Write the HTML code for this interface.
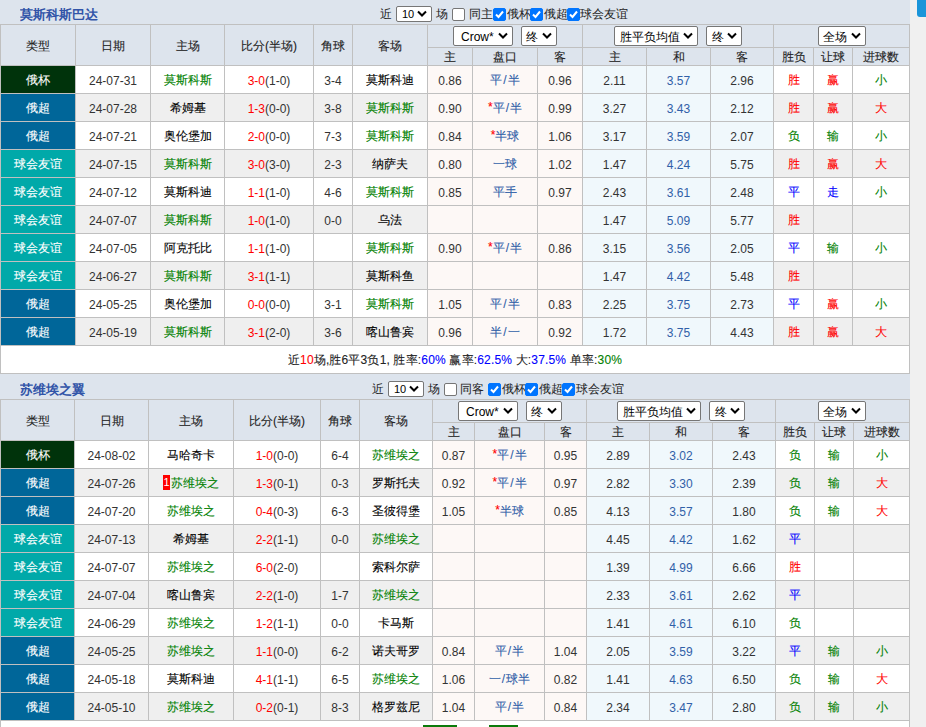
<!DOCTYPE html>
<html><head><meta charset="utf-8"><style>
html,body{margin:0;padding:0;}
body{width:926px;height:727px;overflow:hidden;position:relative;background:#f0f0f0;font-family:"Liberation Sans",sans-serif;font-size:12px;color:#000000;}
body>div{position:absolute;box-sizing:border-box;text-align:center;white-space:nowrap;overflow:hidden;}
.ttl{text-align:left!important;font-size:13px;font-weight:bold;color:#3154a8;width:200px;}
.ct{height:18px;line-height:20px;color:#222;overflow:visible!important;}
.sel{background:#fff;border:1px solid #767676;border-radius:2px;box-sizing:content-box!important;text-align:left!important;padding-left:0;color:#000;}
.sel span{position:absolute;left:5px;top:0;}
.cb{width:13px;height:13px;box-sizing:border-box;border:1px solid #767676;border-radius:2px;background:#fff;}
.cb.on{background:#0075ff;border-color:#0075ff;}
.cb svg{position:absolute;left:-1px;top:-1px;}
.c{position:relative;top:1px;-webkit-text-stroke:0.1px currentColor;}
.d{position:relative;top:2px;color:#333;}
.badge{display:inline-block;background:#f00;color:#fff;width:7px;height:15px;line-height:15px;text-align:center;vertical-align:middle;font-size:11px;position:relative;top:-1px;margin-right:1px;-webkit-text-stroke:0;}
</style></head><body>
<div style="left:0px;top:-1px;width:910px;height:25px;background:#dde4ed"></div>
<div class="ttl" style="left:20px;top:2px;height:25px;line-height:25px">莫斯科斯巴达</div>
<div style="left:0px;top:24px;width:910px;height:41px;background:#dde4ed"></div>
<div style="left:1px;top:25px;width:74px;height:40px;line-height:40px;color:#222"><span class="c">类型</span></div>
<div style="left:76px;top:25px;width:74px;height:40px;line-height:40px;color:#222"><span class="c">日期</span></div>
<div style="left:151px;top:25px;width:73px;height:40px;line-height:40px;color:#222"><span class="c">主场</span></div>
<div style="left:225px;top:25px;width:88px;height:40px;line-height:40px;color:#222"><span class="c">比分(半场)</span></div>
<div style="left:314px;top:25px;width:38px;height:40px;line-height:40px;color:#222"><span class="c">角球</span></div>
<div style="left:353px;top:25px;width:74px;height:40px;line-height:40px;color:#222"><span class="c">客场</span></div>
<div style="left:428px;top:48px;width:44px;height:17px;line-height:17px;color:#222"><span class="c">主</span></div>
<div style="left:473px;top:48px;width:64px;height:17px;line-height:17px;color:#222"><span class="c">盘口</span></div>
<div style="left:538px;top:48px;width:44px;height:17px;line-height:17px;color:#222"><span class="c">客</span></div>
<div style="left:583px;top:48px;width:63px;height:17px;line-height:17px;color:#222"><span class="c">主</span></div>
<div style="left:647px;top:48px;width:63px;height:17px;line-height:17px;color:#222"><span class="c">和</span></div>
<div style="left:711px;top:48px;width:62px;height:17px;line-height:17px;color:#222"><span class="c">客</span></div>
<div style="left:774px;top:48px;width:39px;height:17px;line-height:17px;color:#222"><span class="c">胜负</span></div>
<div style="left:814px;top:48px;width:38px;height:17px;line-height:17px;color:#222"><span class="c">让球</span></div>
<div style="left:853px;top:48px;width:56px;height:17px;line-height:17px;color:#222"><span class="c">进球数</span></div>
<div style="left:1px;top:66px;width:74px;height:27px;background:#00330b;line-height:27px;color:#fff;"><span class="c">俄杯</span></div>
<div style="left:76px;top:66px;width:74px;height:27px;background:#ffffff;line-height:27px;"><span class="d">24-07-31</span></div>
<div style="left:151px;top:66px;width:73px;height:27px;background:#ffffff;line-height:27px;"><span class="c"><span style="color:#008000">莫斯科斯</span></span></div>
<div style="left:225px;top:66px;width:88px;height:27px;background:#ffffff;line-height:27px;"><span class="d"><span style="color:#ff0000">3-0</span>(1-0)</span></div>
<div style="left:314px;top:66px;width:38px;height:27px;background:#ffffff;line-height:27px;"><span class="d">3-4</span></div>
<div style="left:353px;top:66px;width:74px;height:27px;background:#ffffff;line-height:27px;"><span class="c">莫斯科迪</span></div>
<div style="left:428px;top:66px;width:44px;height:27px;background:#fdf8f6;line-height:27px;"><span class="d">0.86</span></div>
<div style="left:473px;top:66px;width:64px;height:27px;background:#fdf8f6;line-height:27px;"><span class="c"><span style="color:#3060a8">平<span style="margin:0 1px">/</span>半</span></span></div>
<div style="left:538px;top:66px;width:44px;height:27px;background:#fdf8f6;line-height:27px;"><span class="d">0.96</span></div>
<div style="left:583px;top:66px;width:63px;height:27px;background:#f0f8fc;line-height:27px;"><span class="d">2.11</span></div>
<div style="left:647px;top:66px;width:63px;height:27px;background:#f0f8fc;line-height:27px;"><span class="d"><span style="color:#3060a8">3.57</span></span></div>
<div style="left:711px;top:66px;width:62px;height:27px;background:#f0f8fc;line-height:27px;"><span class="d">2.96</span></div>
<div style="left:774px;top:66px;width:39px;height:27px;background:#ffffff;line-height:27px;"><span class="c"><span style="color:#ff0000">胜</span></span></div>
<div style="left:814px;top:66px;width:38px;height:27px;background:#ffffff;line-height:27px;"><span class="c"><span style="color:#ff0000">赢</span></span></div>
<div style="left:853px;top:66px;width:56px;height:27px;background:#ffffff;line-height:27px;"><span class="c"><span style="color:#008000">小</span></span></div>
<div style="left:1px;top:94px;width:74px;height:27px;background:#006699;line-height:27px;color:#fff;"><span class="c">俄超</span></div>
<div style="left:76px;top:94px;width:74px;height:27px;background:#efefef;line-height:27px;"><span class="d">24-07-28</span></div>
<div style="left:151px;top:94px;width:73px;height:27px;background:#efefef;line-height:27px;"><span class="c">希姆基</span></div>
<div style="left:225px;top:94px;width:88px;height:27px;background:#efefef;line-height:27px;"><span class="d"><span style="color:#ff0000">1-3</span>(0-0)</span></div>
<div style="left:314px;top:94px;width:38px;height:27px;background:#efefef;line-height:27px;"><span class="d">3-8</span></div>
<div style="left:353px;top:94px;width:74px;height:27px;background:#efefef;line-height:27px;"><span class="c"><span style="color:#008000">莫斯科斯</span></span></div>
<div style="left:428px;top:94px;width:44px;height:27px;background:#fdf8f6;line-height:27px;"><span class="d">0.90</span></div>
<div style="left:473px;top:94px;width:64px;height:27px;background:#fdf8f6;line-height:27px;"><span class="c"><span style="color:#3060a8"><span style="color:#ff0000;position:relative;top:-1px">*</span>平<span style="margin:0 1px">/</span>半</span></span></div>
<div style="left:538px;top:94px;width:44px;height:27px;background:#fdf8f6;line-height:27px;"><span class="d">0.99</span></div>
<div style="left:583px;top:94px;width:63px;height:27px;background:#f0f8fc;line-height:27px;"><span class="d">3.27</span></div>
<div style="left:647px;top:94px;width:63px;height:27px;background:#f0f8fc;line-height:27px;"><span class="d"><span style="color:#3060a8">3.43</span></span></div>
<div style="left:711px;top:94px;width:62px;height:27px;background:#f0f8fc;line-height:27px;"><span class="d">2.12</span></div>
<div style="left:774px;top:94px;width:39px;height:27px;background:#efefef;line-height:27px;"><span class="c"><span style="color:#ff0000">胜</span></span></div>
<div style="left:814px;top:94px;width:38px;height:27px;background:#efefef;line-height:27px;"><span class="c"><span style="color:#ff0000">赢</span></span></div>
<div style="left:853px;top:94px;width:56px;height:27px;background:#efefef;line-height:27px;"><span class="c"><span style="color:#ff0000">大</span></span></div>
<div style="left:1px;top:122px;width:74px;height:27px;background:#006699;line-height:27px;color:#fff;"><span class="c">俄超</span></div>
<div style="left:76px;top:122px;width:74px;height:27px;background:#ffffff;line-height:27px;"><span class="d">24-07-21</span></div>
<div style="left:151px;top:122px;width:73px;height:27px;background:#ffffff;line-height:27px;"><span class="c">奥伦堡加</span></div>
<div style="left:225px;top:122px;width:88px;height:27px;background:#ffffff;line-height:27px;"><span class="d"><span style="color:#ff0000">2-0</span>(0-0)</span></div>
<div style="left:314px;top:122px;width:38px;height:27px;background:#ffffff;line-height:27px;"><span class="d">7-3</span></div>
<div style="left:353px;top:122px;width:74px;height:27px;background:#ffffff;line-height:27px;"><span class="c"><span style="color:#008000">莫斯科斯</span></span></div>
<div style="left:428px;top:122px;width:44px;height:27px;background:#fdf8f6;line-height:27px;"><span class="d">0.84</span></div>
<div style="left:473px;top:122px;width:64px;height:27px;background:#fdf8f6;line-height:27px;"><span class="c"><span style="color:#3060a8"><span style="color:#ff0000;position:relative;top:-1px">*</span>半球</span></span></div>
<div style="left:538px;top:122px;width:44px;height:27px;background:#fdf8f6;line-height:27px;"><span class="d">1.06</span></div>
<div style="left:583px;top:122px;width:63px;height:27px;background:#f0f8fc;line-height:27px;"><span class="d">3.17</span></div>
<div style="left:647px;top:122px;width:63px;height:27px;background:#f0f8fc;line-height:27px;"><span class="d"><span style="color:#3060a8">3.59</span></span></div>
<div style="left:711px;top:122px;width:62px;height:27px;background:#f0f8fc;line-height:27px;"><span class="d">2.07</span></div>
<div style="left:774px;top:122px;width:39px;height:27px;background:#ffffff;line-height:27px;"><span class="c"><span style="color:#008000">负</span></span></div>
<div style="left:814px;top:122px;width:38px;height:27px;background:#ffffff;line-height:27px;"><span class="c"><span style="color:#008000">输</span></span></div>
<div style="left:853px;top:122px;width:56px;height:27px;background:#ffffff;line-height:27px;"><span class="c"><span style="color:#008000">小</span></span></div>
<div style="left:1px;top:150px;width:74px;height:27px;background:#00a9a9;line-height:27px;color:#fff;"><span class="c">球会友谊</span></div>
<div style="left:76px;top:150px;width:74px;height:27px;background:#efefef;line-height:27px;"><span class="d">24-07-15</span></div>
<div style="left:151px;top:150px;width:73px;height:27px;background:#efefef;line-height:27px;"><span class="c"><span style="color:#008000">莫斯科斯</span></span></div>
<div style="left:225px;top:150px;width:88px;height:27px;background:#efefef;line-height:27px;"><span class="d"><span style="color:#ff0000">3-0</span>(3-0)</span></div>
<div style="left:314px;top:150px;width:38px;height:27px;background:#efefef;line-height:27px;"><span class="d">2-3</span></div>
<div style="left:353px;top:150px;width:74px;height:27px;background:#efefef;line-height:27px;"><span class="c">纳萨夫</span></div>
<div style="left:428px;top:150px;width:44px;height:27px;background:#fdf8f6;line-height:27px;"><span class="d">0.80</span></div>
<div style="left:473px;top:150px;width:64px;height:27px;background:#fdf8f6;line-height:27px;"><span class="c"><span style="color:#3060a8">一球</span></span></div>
<div style="left:538px;top:150px;width:44px;height:27px;background:#fdf8f6;line-height:27px;"><span class="d">1.02</span></div>
<div style="left:583px;top:150px;width:63px;height:27px;background:#f0f8fc;line-height:27px;"><span class="d">1.47</span></div>
<div style="left:647px;top:150px;width:63px;height:27px;background:#f0f8fc;line-height:27px;"><span class="d"><span style="color:#3060a8">4.24</span></span></div>
<div style="left:711px;top:150px;width:62px;height:27px;background:#f0f8fc;line-height:27px;"><span class="d">5.75</span></div>
<div style="left:774px;top:150px;width:39px;height:27px;background:#efefef;line-height:27px;"><span class="c"><span style="color:#ff0000">胜</span></span></div>
<div style="left:814px;top:150px;width:38px;height:27px;background:#efefef;line-height:27px;"><span class="c"><span style="color:#ff0000">赢</span></span></div>
<div style="left:853px;top:150px;width:56px;height:27px;background:#efefef;line-height:27px;"><span class="c"><span style="color:#ff0000">大</span></span></div>
<div style="left:1px;top:178px;width:74px;height:27px;background:#00a9a9;line-height:27px;color:#fff;"><span class="c">球会友谊</span></div>
<div style="left:76px;top:178px;width:74px;height:27px;background:#ffffff;line-height:27px;"><span class="d">24-07-12</span></div>
<div style="left:151px;top:178px;width:73px;height:27px;background:#ffffff;line-height:27px;"><span class="c">莫斯科迪</span></div>
<div style="left:225px;top:178px;width:88px;height:27px;background:#ffffff;line-height:27px;"><span class="d"><span style="color:#ff0000">1-1</span>(1-0)</span></div>
<div style="left:314px;top:178px;width:38px;height:27px;background:#ffffff;line-height:27px;"><span class="d">4-6</span></div>
<div style="left:353px;top:178px;width:74px;height:27px;background:#ffffff;line-height:27px;"><span class="c"><span style="color:#008000">莫斯科斯</span></span></div>
<div style="left:428px;top:178px;width:44px;height:27px;background:#fdf8f6;line-height:27px;"><span class="d">0.85</span></div>
<div style="left:473px;top:178px;width:64px;height:27px;background:#fdf8f6;line-height:27px;"><span class="c"><span style="color:#3060a8">平手</span></span></div>
<div style="left:538px;top:178px;width:44px;height:27px;background:#fdf8f6;line-height:27px;"><span class="d">0.97</span></div>
<div style="left:583px;top:178px;width:63px;height:27px;background:#f0f8fc;line-height:27px;"><span class="d">2.43</span></div>
<div style="left:647px;top:178px;width:63px;height:27px;background:#f0f8fc;line-height:27px;"><span class="d"><span style="color:#3060a8">3.61</span></span></div>
<div style="left:711px;top:178px;width:62px;height:27px;background:#f0f8fc;line-height:27px;"><span class="d">2.48</span></div>
<div style="left:774px;top:178px;width:39px;height:27px;background:#ffffff;line-height:27px;"><span class="c"><span style="color:#0000ff">平</span></span></div>
<div style="left:814px;top:178px;width:38px;height:27px;background:#ffffff;line-height:27px;"><span class="c"><span style="color:#0000ff">走</span></span></div>
<div style="left:853px;top:178px;width:56px;height:27px;background:#ffffff;line-height:27px;"><span class="c"><span style="color:#008000">小</span></span></div>
<div style="left:1px;top:206px;width:74px;height:27px;background:#00a9a9;line-height:27px;color:#fff;"><span class="c">球会友谊</span></div>
<div style="left:76px;top:206px;width:74px;height:27px;background:#efefef;line-height:27px;"><span class="d">24-07-07</span></div>
<div style="left:151px;top:206px;width:73px;height:27px;background:#efefef;line-height:27px;"><span class="c"><span style="color:#008000">莫斯科斯</span></span></div>
<div style="left:225px;top:206px;width:88px;height:27px;background:#efefef;line-height:27px;"><span class="d"><span style="color:#ff0000">1-0</span>(1-0)</span></div>
<div style="left:314px;top:206px;width:38px;height:27px;background:#efefef;line-height:27px;"><span class="d">0-0</span></div>
<div style="left:353px;top:206px;width:74px;height:27px;background:#efefef;line-height:27px;"><span class="c">乌法</span></div>
<div style="left:428px;top:206px;width:44px;height:27px;background:#fdf8f6;line-height:27px;"></div>
<div style="left:473px;top:206px;width:64px;height:27px;background:#fdf8f6;line-height:27px;"></div>
<div style="left:538px;top:206px;width:44px;height:27px;background:#fdf8f6;line-height:27px;"></div>
<div style="left:583px;top:206px;width:63px;height:27px;background:#f0f8fc;line-height:27px;"><span class="d">1.47</span></div>
<div style="left:647px;top:206px;width:63px;height:27px;background:#f0f8fc;line-height:27px;"><span class="d"><span style="color:#3060a8">5.09</span></span></div>
<div style="left:711px;top:206px;width:62px;height:27px;background:#f0f8fc;line-height:27px;"><span class="d">5.77</span></div>
<div style="left:774px;top:206px;width:39px;height:27px;background:#efefef;line-height:27px;"><span class="c"><span style="color:#ff0000">胜</span></span></div>
<div style="left:814px;top:206px;width:38px;height:27px;background:#efefef;line-height:27px;"></div>
<div style="left:853px;top:206px;width:56px;height:27px;background:#efefef;line-height:27px;"></div>
<div style="left:1px;top:234px;width:74px;height:27px;background:#00a9a9;line-height:27px;color:#fff;"><span class="c">球会友谊</span></div>
<div style="left:76px;top:234px;width:74px;height:27px;background:#ffffff;line-height:27px;"><span class="d">24-07-05</span></div>
<div style="left:151px;top:234px;width:73px;height:27px;background:#ffffff;line-height:27px;"><span class="c">阿克托比</span></div>
<div style="left:225px;top:234px;width:88px;height:27px;background:#ffffff;line-height:27px;"><span class="d"><span style="color:#ff0000">1-1</span>(1-0)</span></div>
<div style="left:314px;top:234px;width:38px;height:27px;background:#ffffff;line-height:27px;"></div>
<div style="left:353px;top:234px;width:74px;height:27px;background:#ffffff;line-height:27px;"><span class="c"><span style="color:#008000">莫斯科斯</span></span></div>
<div style="left:428px;top:234px;width:44px;height:27px;background:#fdf8f6;line-height:27px;"><span class="d">0.90</span></div>
<div style="left:473px;top:234px;width:64px;height:27px;background:#fdf8f6;line-height:27px;"><span class="c"><span style="color:#3060a8"><span style="color:#ff0000;position:relative;top:-1px">*</span>平<span style="margin:0 1px">/</span>半</span></span></div>
<div style="left:538px;top:234px;width:44px;height:27px;background:#fdf8f6;line-height:27px;"><span class="d">0.86</span></div>
<div style="left:583px;top:234px;width:63px;height:27px;background:#f0f8fc;line-height:27px;"><span class="d">3.15</span></div>
<div style="left:647px;top:234px;width:63px;height:27px;background:#f0f8fc;line-height:27px;"><span class="d"><span style="color:#3060a8">3.56</span></span></div>
<div style="left:711px;top:234px;width:62px;height:27px;background:#f0f8fc;line-height:27px;"><span class="d">2.05</span></div>
<div style="left:774px;top:234px;width:39px;height:27px;background:#ffffff;line-height:27px;"><span class="c"><span style="color:#0000ff">平</span></span></div>
<div style="left:814px;top:234px;width:38px;height:27px;background:#ffffff;line-height:27px;"><span class="c"><span style="color:#008000">输</span></span></div>
<div style="left:853px;top:234px;width:56px;height:27px;background:#ffffff;line-height:27px;"><span class="c"><span style="color:#008000">小</span></span></div>
<div style="left:1px;top:262px;width:74px;height:27px;background:#00a9a9;line-height:27px;color:#fff;"><span class="c">球会友谊</span></div>
<div style="left:76px;top:262px;width:74px;height:27px;background:#efefef;line-height:27px;"><span class="d">24-06-27</span></div>
<div style="left:151px;top:262px;width:73px;height:27px;background:#efefef;line-height:27px;"><span class="c"><span style="color:#008000">莫斯科斯</span></span></div>
<div style="left:225px;top:262px;width:88px;height:27px;background:#efefef;line-height:27px;"><span class="d"><span style="color:#ff0000">3-1</span>(1-1)</span></div>
<div style="left:314px;top:262px;width:38px;height:27px;background:#efefef;line-height:27px;"></div>
<div style="left:353px;top:262px;width:74px;height:27px;background:#efefef;line-height:27px;"><span class="c">莫斯科鱼</span></div>
<div style="left:428px;top:262px;width:44px;height:27px;background:#fdf8f6;line-height:27px;"></div>
<div style="left:473px;top:262px;width:64px;height:27px;background:#fdf8f6;line-height:27px;"></div>
<div style="left:538px;top:262px;width:44px;height:27px;background:#fdf8f6;line-height:27px;"></div>
<div style="left:583px;top:262px;width:63px;height:27px;background:#f0f8fc;line-height:27px;"><span class="d">1.47</span></div>
<div style="left:647px;top:262px;width:63px;height:27px;background:#f0f8fc;line-height:27px;"><span class="d"><span style="color:#3060a8">4.42</span></span></div>
<div style="left:711px;top:262px;width:62px;height:27px;background:#f0f8fc;line-height:27px;"><span class="d">5.48</span></div>
<div style="left:774px;top:262px;width:39px;height:27px;background:#efefef;line-height:27px;"><span class="c"><span style="color:#ff0000">胜</span></span></div>
<div style="left:814px;top:262px;width:38px;height:27px;background:#efefef;line-height:27px;"></div>
<div style="left:853px;top:262px;width:56px;height:27px;background:#efefef;line-height:27px;"></div>
<div style="left:1px;top:290px;width:74px;height:27px;background:#006699;line-height:27px;color:#fff;"><span class="c">俄超</span></div>
<div style="left:76px;top:290px;width:74px;height:27px;background:#ffffff;line-height:27px;"><span class="d">24-05-25</span></div>
<div style="left:151px;top:290px;width:73px;height:27px;background:#ffffff;line-height:27px;"><span class="c">奥伦堡加</span></div>
<div style="left:225px;top:290px;width:88px;height:27px;background:#ffffff;line-height:27px;"><span class="d"><span style="color:#ff0000">0-0</span>(0-0)</span></div>
<div style="left:314px;top:290px;width:38px;height:27px;background:#ffffff;line-height:27px;"><span class="d">3-1</span></div>
<div style="left:353px;top:290px;width:74px;height:27px;background:#ffffff;line-height:27px;"><span class="c"><span style="color:#008000">莫斯科斯</span></span></div>
<div style="left:428px;top:290px;width:44px;height:27px;background:#fdf8f6;line-height:27px;"><span class="d">1.05</span></div>
<div style="left:473px;top:290px;width:64px;height:27px;background:#fdf8f6;line-height:27px;"><span class="c"><span style="color:#3060a8">平<span style="margin:0 1px">/</span>半</span></span></div>
<div style="left:538px;top:290px;width:44px;height:27px;background:#fdf8f6;line-height:27px;"><span class="d">0.83</span></div>
<div style="left:583px;top:290px;width:63px;height:27px;background:#f0f8fc;line-height:27px;"><span class="d">2.25</span></div>
<div style="left:647px;top:290px;width:63px;height:27px;background:#f0f8fc;line-height:27px;"><span class="d"><span style="color:#3060a8">3.75</span></span></div>
<div style="left:711px;top:290px;width:62px;height:27px;background:#f0f8fc;line-height:27px;"><span class="d">2.73</span></div>
<div style="left:774px;top:290px;width:39px;height:27px;background:#ffffff;line-height:27px;"><span class="c"><span style="color:#0000ff">平</span></span></div>
<div style="left:814px;top:290px;width:38px;height:27px;background:#ffffff;line-height:27px;"><span class="c"><span style="color:#ff0000">赢</span></span></div>
<div style="left:853px;top:290px;width:56px;height:27px;background:#ffffff;line-height:27px;"><span class="c"><span style="color:#008000">小</span></span></div>
<div style="left:1px;top:318px;width:74px;height:27px;background:#006699;line-height:27px;color:#fff;"><span class="c">俄超</span></div>
<div style="left:76px;top:318px;width:74px;height:27px;background:#efefef;line-height:27px;"><span class="d">24-05-19</span></div>
<div style="left:151px;top:318px;width:73px;height:27px;background:#efefef;line-height:27px;"><span class="c"><span style="color:#008000">莫斯科斯</span></span></div>
<div style="left:225px;top:318px;width:88px;height:27px;background:#efefef;line-height:27px;"><span class="d"><span style="color:#ff0000">3-1</span>(2-0)</span></div>
<div style="left:314px;top:318px;width:38px;height:27px;background:#efefef;line-height:27px;"><span class="d">3-6</span></div>
<div style="left:353px;top:318px;width:74px;height:27px;background:#efefef;line-height:27px;"><span class="c">喀山鲁宾</span></div>
<div style="left:428px;top:318px;width:44px;height:27px;background:#fdf8f6;line-height:27px;"><span class="d">0.96</span></div>
<div style="left:473px;top:318px;width:64px;height:27px;background:#fdf8f6;line-height:27px;"><span class="c"><span style="color:#3060a8">半<span style="margin:0 1px">/</span>一</span></span></div>
<div style="left:538px;top:318px;width:44px;height:27px;background:#fdf8f6;line-height:27px;"><span class="d">0.92</span></div>
<div style="left:583px;top:318px;width:63px;height:27px;background:#f0f8fc;line-height:27px;"><span class="d">1.72</span></div>
<div style="left:647px;top:318px;width:63px;height:27px;background:#f0f8fc;line-height:27px;"><span class="d"><span style="color:#3060a8">3.75</span></span></div>
<div style="left:711px;top:318px;width:62px;height:27px;background:#f0f8fc;line-height:27px;"><span class="d">4.43</span></div>
<div style="left:774px;top:318px;width:39px;height:27px;background:#efefef;line-height:27px;"><span class="c"><span style="color:#ff0000">胜</span></span></div>
<div style="left:814px;top:318px;width:38px;height:27px;background:#efefef;line-height:27px;"><span class="c"><span style="color:#ff0000">赢</span></span></div>
<div style="left:853px;top:318px;width:56px;height:27px;background:#efefef;line-height:27px;"><span class="c"><span style="color:#ff0000">大</span></span></div>
<div style="left:0px;top:346px;width:910px;height:27px;background:#fff;line-height:27px;letter-spacing:0.17px;color:#222"><span class="c">近<span style="color:#ff0000">10</span>场,胜6平3负1, 胜率:<span style="color:#0000ff">60%</span> 赢率:<span style="color:#0000ff">62.5%</span> 大:<span style="color:#0000ff">37.5%</span> 单率:<span style="color:#008000">30%</span></span></div>
<div style="left:0px;top:24px;width:910px;height:1px;background:#c0c0c0"></div>
<div style="left:427px;top:47px;width:483px;height:1px;background:#c0c0c0"></div>
<div style="left:0px;top:65px;width:910px;height:1px;background:#c0c0c0"></div>
<div style="left:0px;top:93px;width:910px;height:1px;background:#c0c0c0"></div>
<div style="left:0px;top:121px;width:910px;height:1px;background:#c0c0c0"></div>
<div style="left:0px;top:149px;width:910px;height:1px;background:#c0c0c0"></div>
<div style="left:0px;top:177px;width:910px;height:1px;background:#c0c0c0"></div>
<div style="left:0px;top:205px;width:910px;height:1px;background:#c0c0c0"></div>
<div style="left:0px;top:233px;width:910px;height:1px;background:#c0c0c0"></div>
<div style="left:0px;top:261px;width:910px;height:1px;background:#c0c0c0"></div>
<div style="left:0px;top:289px;width:910px;height:1px;background:#c0c0c0"></div>
<div style="left:0px;top:317px;width:910px;height:1px;background:#c0c0c0"></div>
<div style="left:0px;top:345px;width:910px;height:1px;background:#c0c0c0"></div>
<div style="left:0px;top:373px;width:910px;height:1px;background:#c0c0c0"></div>
<div style="left:0px;top:24px;width:1px;height:349px;background:#c0c0c0"></div>
<div style="left:75px;top:24px;width:1px;height:322px;background:#c0c0c0"></div>
<div style="left:150px;top:24px;width:1px;height:322px;background:#c0c0c0"></div>
<div style="left:224px;top:24px;width:1px;height:322px;background:#c0c0c0"></div>
<div style="left:313px;top:24px;width:1px;height:322px;background:#c0c0c0"></div>
<div style="left:352px;top:24px;width:1px;height:322px;background:#c0c0c0"></div>
<div style="left:427px;top:24px;width:1px;height:322px;background:#c0c0c0"></div>
<div style="left:472px;top:47px;width:1px;height:299px;background:#c0c0c0"></div>
<div style="left:537px;top:47px;width:1px;height:299px;background:#c0c0c0"></div>
<div style="left:582px;top:24px;width:1px;height:322px;background:#c0c0c0"></div>
<div style="left:646px;top:47px;width:1px;height:299px;background:#c0c0c0"></div>
<div style="left:710px;top:47px;width:1px;height:299px;background:#c0c0c0"></div>
<div style="left:773px;top:24px;width:1px;height:322px;background:#c0c0c0"></div>
<div style="left:813px;top:47px;width:1px;height:299px;background:#c0c0c0"></div>
<div style="left:852px;top:47px;width:1px;height:299px;background:#c0c0c0"></div>
<div style="left:909px;top:24px;width:1px;height:349px;background:#c0c0c0"></div>
<div class="ct" style="left:379.5px;top:4px;">近</div>
<div class="sel" style="left:396px;top:6px;width:34px;height:14px;"><span style="font-size:11px;line-height:14px;left:5px;top:0px;letter-spacing:0px">10</span><svg width="10" height="7" viewBox="0 0 10 7" style="position:absolute;left:20px;top:3px"><path d="M1 1.5 L5 5.5 L9 1.5" stroke="#000" stroke-width="2" fill="none"/></svg></div>
<div class="ct" style="left:435.5px;top:4px;">场</div>
<div class="cb" style="left:452px;top:8px"></div>
<div class="ct" style="left:468.5px;top:4px;">同主</div>
<div class="cb on" style="left:493px;top:8px"><svg width="13" height="13" viewBox="0 0 13 13"><path d="M3 6.5 L5.5 9 L10 3.5" stroke="#fff" stroke-width="2" fill="none"/></svg></div>
<div class="ct" style="left:507px;top:4px;">俄杯</div>
<div class="cb on" style="left:530px;top:8px"><svg width="13" height="13" viewBox="0 0 13 13"><path d="M3 6.5 L5.5 9 L10 3.5" stroke="#fff" stroke-width="2" fill="none"/></svg></div>
<div class="ct" style="left:544px;top:4px;">俄超</div>
<div class="cb on" style="left:567px;top:8px"><svg width="13" height="13" viewBox="0 0 13 13"><path d="M3 6.5 L5.5 9 L10 3.5" stroke="#fff" stroke-width="2" fill="none"/></svg></div>
<div class="ct" style="left:580px;top:4px;">球会友谊</div>
<div class="sel" style="left:453px;top:26px;width:58px;height:18px;"><span style="font-size:12px;line-height:18px;left:7px;top:1px;letter-spacing:0px">Crow*</span><svg width="10" height="7" viewBox="0 0 10 7" style="position:absolute;left:44px;top:5px"><path d="M1 1.5 L5 5.5 L9 1.5" stroke="#000" stroke-width="2" fill="none"/></svg></div>
<div class="sel" style="left:521px;top:26px;width:34px;height:18px;"><span style="font-size:12px;line-height:18px;left:4px;top:1px;letter-spacing:0px">终</span><svg width="10" height="7" viewBox="0 0 10 7" style="position:absolute;left:20px;top:5px"><path d="M1 1.5 L5 5.5 L9 1.5" stroke="#000" stroke-width="2" fill="none"/></svg></div>
<div class="sel" style="left:614px;top:26px;width:82px;height:18px;"><span style="font-size:12px;line-height:18px;left:5px;top:1px;letter-spacing:0px">胜平负均值</span><svg width="10" height="7" viewBox="0 0 10 7" style="position:absolute;left:68px;top:5px"><path d="M1 1.5 L5 5.5 L9 1.5" stroke="#000" stroke-width="2" fill="none"/></svg></div>
<div class="sel" style="left:706px;top:26px;width:34px;height:18px;"><span style="font-size:12px;line-height:18px;left:5px;top:1px;letter-spacing:0px">终</span><svg width="10" height="7" viewBox="0 0 10 7" style="position:absolute;left:20px;top:5px"><path d="M1 1.5 L5 5.5 L9 1.5" stroke="#000" stroke-width="2" fill="none"/></svg></div>
<div class="sel" style="left:818px;top:26px;width:46px;height:18px;"><span style="font-size:12px;line-height:18px;left:4px;top:1px;letter-spacing:0px">全场</span><svg width="10" height="7" viewBox="0 0 10 7" style="position:absolute;left:32px;top:5px"><path d="M1 1.5 L5 5.5 L9 1.5" stroke="#000" stroke-width="2" fill="none"/></svg></div>
<div style="left:0px;top:374px;width:910px;height:25px;background:#dde4ed"></div>
<div class="ttl" style="left:20px;top:377px;height:25px;line-height:25px">苏维埃之翼</div>
<div style="left:0px;top:399px;width:910px;height:41px;background:#dde4ed"></div>
<div style="left:1px;top:400px;width:73px;height:40px;line-height:40px;color:#222"><span class="c">类型</span></div>
<div style="left:75px;top:400px;width:73px;height:40px;line-height:40px;color:#222"><span class="c">日期</span></div>
<div style="left:149px;top:400px;width:84px;height:40px;line-height:40px;color:#222"><span class="c">主场</span></div>
<div style="left:234px;top:400px;width:86px;height:40px;line-height:40px;color:#222"><span class="c">比分(半场)</span></div>
<div style="left:321px;top:400px;width:38px;height:40px;line-height:40px;color:#222"><span class="c">角球</span></div>
<div style="left:360px;top:400px;width:72px;height:40px;line-height:40px;color:#222"><span class="c">客场</span></div>
<div style="left:433px;top:423px;width:41px;height:17px;line-height:17px;color:#222"><span class="c">主</span></div>
<div style="left:475px;top:423px;width:69px;height:17px;line-height:17px;color:#222"><span class="c">盘口</span></div>
<div style="left:545px;top:423px;width:41px;height:17px;line-height:17px;color:#222"><span class="c">客</span></div>
<div style="left:587px;top:423px;width:62px;height:17px;line-height:17px;color:#222"><span class="c">主</span></div>
<div style="left:650px;top:423px;width:62px;height:17px;line-height:17px;color:#222"><span class="c">和</span></div>
<div style="left:713px;top:423px;width:62px;height:17px;line-height:17px;color:#222"><span class="c">客</span></div>
<div style="left:776px;top:423px;width:38px;height:17px;line-height:17px;color:#222"><span class="c">胜负</span></div>
<div style="left:815px;top:423px;width:38px;height:17px;line-height:17px;color:#222"><span class="c">让球</span></div>
<div style="left:854px;top:423px;width:55px;height:17px;line-height:17px;color:#222"><span class="c">进球数</span></div>
<div style="left:1px;top:441px;width:73px;height:27px;background:#00330b;line-height:27px;color:#fff;"><span class="c">俄杯</span></div>
<div style="left:75px;top:441px;width:73px;height:27px;background:#ffffff;line-height:27px;"><span class="d">24-08-02</span></div>
<div style="left:149px;top:441px;width:84px;height:27px;background:#ffffff;line-height:27px;"><span class="c">马哈奇卡</span></div>
<div style="left:234px;top:441px;width:86px;height:27px;background:#ffffff;line-height:27px;"><span class="d"><span style="color:#ff0000">1-0</span>(0-0)</span></div>
<div style="left:321px;top:441px;width:38px;height:27px;background:#ffffff;line-height:27px;"><span class="d">6-4</span></div>
<div style="left:360px;top:441px;width:72px;height:27px;background:#ffffff;line-height:27px;"><span class="c"><span style="color:#008000">苏维埃之</span></span></div>
<div style="left:433px;top:441px;width:41px;height:27px;background:#fdf8f6;line-height:27px;"><span class="d">0.87</span></div>
<div style="left:475px;top:441px;width:69px;height:27px;background:#fdf8f6;line-height:27px;"><span class="c"><span style="color:#3060a8"><span style="color:#ff0000;position:relative;top:-1px">*</span>平<span style="margin:0 1px">/</span>半</span></span></div>
<div style="left:545px;top:441px;width:41px;height:27px;background:#fdf8f6;line-height:27px;"><span class="d">0.95</span></div>
<div style="left:587px;top:441px;width:62px;height:27px;background:#f0f8fc;line-height:27px;"><span class="d">2.89</span></div>
<div style="left:650px;top:441px;width:62px;height:27px;background:#f0f8fc;line-height:27px;"><span class="d"><span style="color:#3060a8">3.02</span></span></div>
<div style="left:713px;top:441px;width:62px;height:27px;background:#f0f8fc;line-height:27px;"><span class="d">2.43</span></div>
<div style="left:776px;top:441px;width:38px;height:27px;background:#ffffff;line-height:27px;"><span class="c"><span style="color:#008000">负</span></span></div>
<div style="left:815px;top:441px;width:38px;height:27px;background:#ffffff;line-height:27px;"><span class="c"><span style="color:#008000">输</span></span></div>
<div style="left:854px;top:441px;width:55px;height:27px;background:#ffffff;line-height:27px;"><span class="c"><span style="color:#008000">小</span></span></div>
<div style="left:1px;top:469px;width:73px;height:27px;background:#006699;line-height:27px;color:#fff;"><span class="c">俄超</span></div>
<div style="left:75px;top:469px;width:73px;height:27px;background:#efefef;line-height:27px;"><span class="d">24-07-26</span></div>
<div style="left:149px;top:469px;width:84px;height:27px;background:#efefef;line-height:27px;"><span class="c"><span class="badge">1</span><span style="color:#008000">苏维埃之</span></span></div>
<div style="left:234px;top:469px;width:86px;height:27px;background:#efefef;line-height:27px;"><span class="d"><span style="color:#ff0000">1-3</span>(0-1)</span></div>
<div style="left:321px;top:469px;width:38px;height:27px;background:#efefef;line-height:27px;"><span class="d">0-3</span></div>
<div style="left:360px;top:469px;width:72px;height:27px;background:#efefef;line-height:27px;"><span class="c">罗斯托夫</span></div>
<div style="left:433px;top:469px;width:41px;height:27px;background:#fdf8f6;line-height:27px;"><span class="d">0.92</span></div>
<div style="left:475px;top:469px;width:69px;height:27px;background:#fdf8f6;line-height:27px;"><span class="c"><span style="color:#3060a8"><span style="color:#ff0000;position:relative;top:-1px">*</span>平<span style="margin:0 1px">/</span>半</span></span></div>
<div style="left:545px;top:469px;width:41px;height:27px;background:#fdf8f6;line-height:27px;"><span class="d">0.97</span></div>
<div style="left:587px;top:469px;width:62px;height:27px;background:#f0f8fc;line-height:27px;"><span class="d">2.82</span></div>
<div style="left:650px;top:469px;width:62px;height:27px;background:#f0f8fc;line-height:27px;"><span class="d"><span style="color:#3060a8">3.30</span></span></div>
<div style="left:713px;top:469px;width:62px;height:27px;background:#f0f8fc;line-height:27px;"><span class="d">2.39</span></div>
<div style="left:776px;top:469px;width:38px;height:27px;background:#efefef;line-height:27px;"><span class="c"><span style="color:#008000">负</span></span></div>
<div style="left:815px;top:469px;width:38px;height:27px;background:#efefef;line-height:27px;"><span class="c"><span style="color:#008000">输</span></span></div>
<div style="left:854px;top:469px;width:55px;height:27px;background:#efefef;line-height:27px;"><span class="c"><span style="color:#ff0000">大</span></span></div>
<div style="left:1px;top:497px;width:73px;height:27px;background:#006699;line-height:27px;color:#fff;"><span class="c">俄超</span></div>
<div style="left:75px;top:497px;width:73px;height:27px;background:#ffffff;line-height:27px;"><span class="d">24-07-20</span></div>
<div style="left:149px;top:497px;width:84px;height:27px;background:#ffffff;line-height:27px;"><span class="c"><span style="color:#008000">苏维埃之</span></span></div>
<div style="left:234px;top:497px;width:86px;height:27px;background:#ffffff;line-height:27px;"><span class="d"><span style="color:#ff0000">0-4</span>(0-3)</span></div>
<div style="left:321px;top:497px;width:38px;height:27px;background:#ffffff;line-height:27px;"><span class="d">6-3</span></div>
<div style="left:360px;top:497px;width:72px;height:27px;background:#ffffff;line-height:27px;"><span class="c">圣彼得堡</span></div>
<div style="left:433px;top:497px;width:41px;height:27px;background:#fdf8f6;line-height:27px;"><span class="d">1.05</span></div>
<div style="left:475px;top:497px;width:69px;height:27px;background:#fdf8f6;line-height:27px;"><span class="c"><span style="color:#3060a8"><span style="color:#ff0000;position:relative;top:-1px">*</span>半球</span></span></div>
<div style="left:545px;top:497px;width:41px;height:27px;background:#fdf8f6;line-height:27px;"><span class="d">0.85</span></div>
<div style="left:587px;top:497px;width:62px;height:27px;background:#f0f8fc;line-height:27px;"><span class="d">4.13</span></div>
<div style="left:650px;top:497px;width:62px;height:27px;background:#f0f8fc;line-height:27px;"><span class="d"><span style="color:#3060a8">3.57</span></span></div>
<div style="left:713px;top:497px;width:62px;height:27px;background:#f0f8fc;line-height:27px;"><span class="d">1.80</span></div>
<div style="left:776px;top:497px;width:38px;height:27px;background:#ffffff;line-height:27px;"><span class="c"><span style="color:#008000">负</span></span></div>
<div style="left:815px;top:497px;width:38px;height:27px;background:#ffffff;line-height:27px;"><span class="c"><span style="color:#008000">输</span></span></div>
<div style="left:854px;top:497px;width:55px;height:27px;background:#ffffff;line-height:27px;"><span class="c"><span style="color:#ff0000">大</span></span></div>
<div style="left:1px;top:525px;width:73px;height:27px;background:#00a9a9;line-height:27px;color:#fff;"><span class="c">球会友谊</span></div>
<div style="left:75px;top:525px;width:73px;height:27px;background:#efefef;line-height:27px;"><span class="d">24-07-13</span></div>
<div style="left:149px;top:525px;width:84px;height:27px;background:#efefef;line-height:27px;"><span class="c">希姆基</span></div>
<div style="left:234px;top:525px;width:86px;height:27px;background:#efefef;line-height:27px;"><span class="d"><span style="color:#ff0000">2-2</span>(1-1)</span></div>
<div style="left:321px;top:525px;width:38px;height:27px;background:#efefef;line-height:27px;"><span class="d">0-0</span></div>
<div style="left:360px;top:525px;width:72px;height:27px;background:#efefef;line-height:27px;"><span class="c"><span style="color:#008000">苏维埃之</span></span></div>
<div style="left:433px;top:525px;width:41px;height:27px;background:#fdf8f6;line-height:27px;"></div>
<div style="left:475px;top:525px;width:69px;height:27px;background:#fdf8f6;line-height:27px;"></div>
<div style="left:545px;top:525px;width:41px;height:27px;background:#fdf8f6;line-height:27px;"></div>
<div style="left:587px;top:525px;width:62px;height:27px;background:#f0f8fc;line-height:27px;"><span class="d">4.45</span></div>
<div style="left:650px;top:525px;width:62px;height:27px;background:#f0f8fc;line-height:27px;"><span class="d"><span style="color:#3060a8">4.42</span></span></div>
<div style="left:713px;top:525px;width:62px;height:27px;background:#f0f8fc;line-height:27px;"><span class="d">1.62</span></div>
<div style="left:776px;top:525px;width:38px;height:27px;background:#efefef;line-height:27px;"><span class="c"><span style="color:#0000ff">平</span></span></div>
<div style="left:815px;top:525px;width:38px;height:27px;background:#efefef;line-height:27px;"></div>
<div style="left:854px;top:525px;width:55px;height:27px;background:#efefef;line-height:27px;"></div>
<div style="left:1px;top:553px;width:73px;height:27px;background:#00a9a9;line-height:27px;color:#fff;"><span class="c">球会友谊</span></div>
<div style="left:75px;top:553px;width:73px;height:27px;background:#ffffff;line-height:27px;"><span class="d">24-07-07</span></div>
<div style="left:149px;top:553px;width:84px;height:27px;background:#ffffff;line-height:27px;"><span class="c"><span style="color:#008000">苏维埃之</span></span></div>
<div style="left:234px;top:553px;width:86px;height:27px;background:#ffffff;line-height:27px;"><span class="d"><span style="color:#ff0000">6-0</span>(2-0)</span></div>
<div style="left:321px;top:553px;width:38px;height:27px;background:#ffffff;line-height:27px;"></div>
<div style="left:360px;top:553px;width:72px;height:27px;background:#ffffff;line-height:27px;"><span class="c">索科尔萨</span></div>
<div style="left:433px;top:553px;width:41px;height:27px;background:#fdf8f6;line-height:27px;"></div>
<div style="left:475px;top:553px;width:69px;height:27px;background:#fdf8f6;line-height:27px;"></div>
<div style="left:545px;top:553px;width:41px;height:27px;background:#fdf8f6;line-height:27px;"></div>
<div style="left:587px;top:553px;width:62px;height:27px;background:#f0f8fc;line-height:27px;"><span class="d">1.39</span></div>
<div style="left:650px;top:553px;width:62px;height:27px;background:#f0f8fc;line-height:27px;"><span class="d"><span style="color:#3060a8">4.99</span></span></div>
<div style="left:713px;top:553px;width:62px;height:27px;background:#f0f8fc;line-height:27px;"><span class="d">6.66</span></div>
<div style="left:776px;top:553px;width:38px;height:27px;background:#ffffff;line-height:27px;"><span class="c"><span style="color:#ff0000">胜</span></span></div>
<div style="left:815px;top:553px;width:38px;height:27px;background:#ffffff;line-height:27px;"></div>
<div style="left:854px;top:553px;width:55px;height:27px;background:#ffffff;line-height:27px;"></div>
<div style="left:1px;top:581px;width:73px;height:27px;background:#00a9a9;line-height:27px;color:#fff;"><span class="c">球会友谊</span></div>
<div style="left:75px;top:581px;width:73px;height:27px;background:#efefef;line-height:27px;"><span class="d">24-07-04</span></div>
<div style="left:149px;top:581px;width:84px;height:27px;background:#efefef;line-height:27px;"><span class="c">喀山鲁宾</span></div>
<div style="left:234px;top:581px;width:86px;height:27px;background:#efefef;line-height:27px;"><span class="d"><span style="color:#ff0000">2-2</span>(1-0)</span></div>
<div style="left:321px;top:581px;width:38px;height:27px;background:#efefef;line-height:27px;"><span class="d">1-7</span></div>
<div style="left:360px;top:581px;width:72px;height:27px;background:#efefef;line-height:27px;"><span class="c"><span style="color:#008000">苏维埃之</span></span></div>
<div style="left:433px;top:581px;width:41px;height:27px;background:#fdf8f6;line-height:27px;"></div>
<div style="left:475px;top:581px;width:69px;height:27px;background:#fdf8f6;line-height:27px;"></div>
<div style="left:545px;top:581px;width:41px;height:27px;background:#fdf8f6;line-height:27px;"></div>
<div style="left:587px;top:581px;width:62px;height:27px;background:#f0f8fc;line-height:27px;"><span class="d">2.33</span></div>
<div style="left:650px;top:581px;width:62px;height:27px;background:#f0f8fc;line-height:27px;"><span class="d"><span style="color:#3060a8">3.61</span></span></div>
<div style="left:713px;top:581px;width:62px;height:27px;background:#f0f8fc;line-height:27px;"><span class="d">2.62</span></div>
<div style="left:776px;top:581px;width:38px;height:27px;background:#efefef;line-height:27px;"><span class="c"><span style="color:#0000ff">平</span></span></div>
<div style="left:815px;top:581px;width:38px;height:27px;background:#efefef;line-height:27px;"></div>
<div style="left:854px;top:581px;width:55px;height:27px;background:#efefef;line-height:27px;"></div>
<div style="left:1px;top:609px;width:73px;height:27px;background:#00a9a9;line-height:27px;color:#fff;"><span class="c">球会友谊</span></div>
<div style="left:75px;top:609px;width:73px;height:27px;background:#ffffff;line-height:27px;"><span class="d">24-06-29</span></div>
<div style="left:149px;top:609px;width:84px;height:27px;background:#ffffff;line-height:27px;"><span class="c"><span style="color:#008000">苏维埃之</span></span></div>
<div style="left:234px;top:609px;width:86px;height:27px;background:#ffffff;line-height:27px;"><span class="d"><span style="color:#ff0000">1-2</span>(1-1)</span></div>
<div style="left:321px;top:609px;width:38px;height:27px;background:#ffffff;line-height:27px;"><span class="d">0-0</span></div>
<div style="left:360px;top:609px;width:72px;height:27px;background:#ffffff;line-height:27px;"><span class="c">卡马斯</span></div>
<div style="left:433px;top:609px;width:41px;height:27px;background:#fdf8f6;line-height:27px;"></div>
<div style="left:475px;top:609px;width:69px;height:27px;background:#fdf8f6;line-height:27px;"></div>
<div style="left:545px;top:609px;width:41px;height:27px;background:#fdf8f6;line-height:27px;"></div>
<div style="left:587px;top:609px;width:62px;height:27px;background:#f0f8fc;line-height:27px;"><span class="d">1.41</span></div>
<div style="left:650px;top:609px;width:62px;height:27px;background:#f0f8fc;line-height:27px;"><span class="d"><span style="color:#3060a8">4.61</span></span></div>
<div style="left:713px;top:609px;width:62px;height:27px;background:#f0f8fc;line-height:27px;"><span class="d">6.10</span></div>
<div style="left:776px;top:609px;width:38px;height:27px;background:#ffffff;line-height:27px;"><span class="c"><span style="color:#008000">负</span></span></div>
<div style="left:815px;top:609px;width:38px;height:27px;background:#ffffff;line-height:27px;"></div>
<div style="left:854px;top:609px;width:55px;height:27px;background:#ffffff;line-height:27px;"></div>
<div style="left:1px;top:637px;width:73px;height:27px;background:#006699;line-height:27px;color:#fff;"><span class="c">俄超</span></div>
<div style="left:75px;top:637px;width:73px;height:27px;background:#efefef;line-height:27px;"><span class="d">24-05-25</span></div>
<div style="left:149px;top:637px;width:84px;height:27px;background:#efefef;line-height:27px;"><span class="c"><span style="color:#008000">苏维埃之</span></span></div>
<div style="left:234px;top:637px;width:86px;height:27px;background:#efefef;line-height:27px;"><span class="d"><span style="color:#ff0000">1-1</span>(0-0)</span></div>
<div style="left:321px;top:637px;width:38px;height:27px;background:#efefef;line-height:27px;"><span class="d">6-2</span></div>
<div style="left:360px;top:637px;width:72px;height:27px;background:#efefef;line-height:27px;"><span class="c">诺夫哥罗</span></div>
<div style="left:433px;top:637px;width:41px;height:27px;background:#fdf8f6;line-height:27px;"><span class="d">0.84</span></div>
<div style="left:475px;top:637px;width:69px;height:27px;background:#fdf8f6;line-height:27px;"><span class="c"><span style="color:#3060a8">平<span style="margin:0 1px">/</span>半</span></span></div>
<div style="left:545px;top:637px;width:41px;height:27px;background:#fdf8f6;line-height:27px;"><span class="d">1.04</span></div>
<div style="left:587px;top:637px;width:62px;height:27px;background:#f0f8fc;line-height:27px;"><span class="d">2.05</span></div>
<div style="left:650px;top:637px;width:62px;height:27px;background:#f0f8fc;line-height:27px;"><span class="d"><span style="color:#3060a8">3.59</span></span></div>
<div style="left:713px;top:637px;width:62px;height:27px;background:#f0f8fc;line-height:27px;"><span class="d">3.22</span></div>
<div style="left:776px;top:637px;width:38px;height:27px;background:#efefef;line-height:27px;"><span class="c"><span style="color:#0000ff">平</span></span></div>
<div style="left:815px;top:637px;width:38px;height:27px;background:#efefef;line-height:27px;"><span class="c"><span style="color:#008000">输</span></span></div>
<div style="left:854px;top:637px;width:55px;height:27px;background:#efefef;line-height:27px;"><span class="c"><span style="color:#008000">小</span></span></div>
<div style="left:1px;top:665px;width:73px;height:27px;background:#006699;line-height:27px;color:#fff;"><span class="c">俄超</span></div>
<div style="left:75px;top:665px;width:73px;height:27px;background:#ffffff;line-height:27px;"><span class="d">24-05-18</span></div>
<div style="left:149px;top:665px;width:84px;height:27px;background:#ffffff;line-height:27px;"><span class="c">莫斯科迪</span></div>
<div style="left:234px;top:665px;width:86px;height:27px;background:#ffffff;line-height:27px;"><span class="d"><span style="color:#ff0000">4-1</span>(1-1)</span></div>
<div style="left:321px;top:665px;width:38px;height:27px;background:#ffffff;line-height:27px;"><span class="d">6-5</span></div>
<div style="left:360px;top:665px;width:72px;height:27px;background:#ffffff;line-height:27px;"><span class="c"><span style="color:#008000">苏维埃之</span></span></div>
<div style="left:433px;top:665px;width:41px;height:27px;background:#fdf8f6;line-height:27px;"><span class="d">1.06</span></div>
<div style="left:475px;top:665px;width:69px;height:27px;background:#fdf8f6;line-height:27px;"><span class="c"><span style="color:#3060a8">一<span style="margin:0 1px">/</span>球半</span></span></div>
<div style="left:545px;top:665px;width:41px;height:27px;background:#fdf8f6;line-height:27px;"><span class="d">0.82</span></div>
<div style="left:587px;top:665px;width:62px;height:27px;background:#f0f8fc;line-height:27px;"><span class="d">1.41</span></div>
<div style="left:650px;top:665px;width:62px;height:27px;background:#f0f8fc;line-height:27px;"><span class="d"><span style="color:#3060a8">4.63</span></span></div>
<div style="left:713px;top:665px;width:62px;height:27px;background:#f0f8fc;line-height:27px;"><span class="d">6.50</span></div>
<div style="left:776px;top:665px;width:38px;height:27px;background:#ffffff;line-height:27px;"><span class="c"><span style="color:#008000">负</span></span></div>
<div style="left:815px;top:665px;width:38px;height:27px;background:#ffffff;line-height:27px;"><span class="c"><span style="color:#008000">输</span></span></div>
<div style="left:854px;top:665px;width:55px;height:27px;background:#ffffff;line-height:27px;"><span class="c"><span style="color:#ff0000">大</span></span></div>
<div style="left:1px;top:693px;width:73px;height:27px;background:#006699;line-height:27px;color:#fff;"><span class="c">俄超</span></div>
<div style="left:75px;top:693px;width:73px;height:27px;background:#efefef;line-height:27px;"><span class="d">24-05-10</span></div>
<div style="left:149px;top:693px;width:84px;height:27px;background:#efefef;line-height:27px;"><span class="c"><span style="color:#008000">苏维埃之</span></span></div>
<div style="left:234px;top:693px;width:86px;height:27px;background:#efefef;line-height:27px;"><span class="d"><span style="color:#ff0000">0-2</span>(0-1)</span></div>
<div style="left:321px;top:693px;width:38px;height:27px;background:#efefef;line-height:27px;"><span class="d">8-3</span></div>
<div style="left:360px;top:693px;width:72px;height:27px;background:#efefef;line-height:27px;"><span class="c">格罗兹尼</span></div>
<div style="left:433px;top:693px;width:41px;height:27px;background:#fdf8f6;line-height:27px;"><span class="d">1.04</span></div>
<div style="left:475px;top:693px;width:69px;height:27px;background:#fdf8f6;line-height:27px;"><span class="c"><span style="color:#3060a8">平<span style="margin:0 1px">/</span>半</span></span></div>
<div style="left:545px;top:693px;width:41px;height:27px;background:#fdf8f6;line-height:27px;"><span class="d">0.84</span></div>
<div style="left:587px;top:693px;width:62px;height:27px;background:#f0f8fc;line-height:27px;"><span class="d">2.34</span></div>
<div style="left:650px;top:693px;width:62px;height:27px;background:#f0f8fc;line-height:27px;"><span class="d"><span style="color:#3060a8">3.47</span></span></div>
<div style="left:713px;top:693px;width:62px;height:27px;background:#f0f8fc;line-height:27px;"><span class="d">2.80</span></div>
<div style="left:776px;top:693px;width:38px;height:27px;background:#efefef;line-height:27px;"><span class="c"><span style="color:#008000">负</span></span></div>
<div style="left:815px;top:693px;width:38px;height:27px;background:#efefef;line-height:27px;"><span class="c"><span style="color:#008000">输</span></span></div>
<div style="left:854px;top:693px;width:55px;height:27px;background:#efefef;line-height:27px;"><span class="c"><span style="color:#008000">小</span></span></div>
<div style="left:0px;top:721px;width:910px;height:6px;background:#fff;line-height:6px;letter-spacing:0.17px;color:#222"></div>
<div style="left:0px;top:399px;width:910px;height:1px;background:#c0c0c0"></div>
<div style="left:432px;top:422px;width:478px;height:1px;background:#c0c0c0"></div>
<div style="left:0px;top:440px;width:910px;height:1px;background:#c0c0c0"></div>
<div style="left:0px;top:468px;width:910px;height:1px;background:#c0c0c0"></div>
<div style="left:0px;top:496px;width:910px;height:1px;background:#c0c0c0"></div>
<div style="left:0px;top:524px;width:910px;height:1px;background:#c0c0c0"></div>
<div style="left:0px;top:552px;width:910px;height:1px;background:#c0c0c0"></div>
<div style="left:0px;top:580px;width:910px;height:1px;background:#c0c0c0"></div>
<div style="left:0px;top:608px;width:910px;height:1px;background:#c0c0c0"></div>
<div style="left:0px;top:636px;width:910px;height:1px;background:#c0c0c0"></div>
<div style="left:0px;top:664px;width:910px;height:1px;background:#c0c0c0"></div>
<div style="left:0px;top:692px;width:910px;height:1px;background:#c0c0c0"></div>
<div style="left:0px;top:720px;width:910px;height:1px;background:#c0c0c0"></div>
<div style="left:0px;top:399px;width:1px;height:328px;background:#c0c0c0"></div>
<div style="left:74px;top:399px;width:1px;height:322px;background:#c0c0c0"></div>
<div style="left:148px;top:399px;width:1px;height:322px;background:#c0c0c0"></div>
<div style="left:233px;top:399px;width:1px;height:322px;background:#c0c0c0"></div>
<div style="left:320px;top:399px;width:1px;height:322px;background:#c0c0c0"></div>
<div style="left:359px;top:399px;width:1px;height:322px;background:#c0c0c0"></div>
<div style="left:432px;top:399px;width:1px;height:322px;background:#c0c0c0"></div>
<div style="left:474px;top:422px;width:1px;height:299px;background:#c0c0c0"></div>
<div style="left:544px;top:422px;width:1px;height:299px;background:#c0c0c0"></div>
<div style="left:586px;top:399px;width:1px;height:322px;background:#c0c0c0"></div>
<div style="left:649px;top:422px;width:1px;height:299px;background:#c0c0c0"></div>
<div style="left:712px;top:422px;width:1px;height:299px;background:#c0c0c0"></div>
<div style="left:775px;top:399px;width:1px;height:322px;background:#c0c0c0"></div>
<div style="left:814px;top:422px;width:1px;height:299px;background:#c0c0c0"></div>
<div style="left:853px;top:422px;width:1px;height:299px;background:#c0c0c0"></div>
<div style="left:909px;top:399px;width:1px;height:328px;background:#c0c0c0"></div>
<div class="ct" style="left:371.5px;top:379px;">近</div>
<div class="sel" style="left:388px;top:381px;width:34px;height:14px;"><span style="font-size:11px;line-height:14px;left:5px;top:0px;letter-spacing:0px">10</span><svg width="10" height="7" viewBox="0 0 10 7" style="position:absolute;left:20px;top:3px"><path d="M1 1.5 L5 5.5 L9 1.5" stroke="#000" stroke-width="2" fill="none"/></svg></div>
<div class="ct" style="left:427.5px;top:379px;">场</div>
<div class="cb" style="left:444px;top:383px"></div>
<div class="ct" style="left:459.5px;top:379px;">同客</div>
<div class="cb on" style="left:488px;top:383px"><svg width="13" height="13" viewBox="0 0 13 13"><path d="M3 6.5 L5.5 9 L10 3.5" stroke="#fff" stroke-width="2" fill="none"/></svg></div>
<div class="ct" style="left:501.5px;top:379px;">俄杯</div>
<div class="cb on" style="left:525px;top:383px"><svg width="13" height="13" viewBox="0 0 13 13"><path d="M3 6.5 L5.5 9 L10 3.5" stroke="#fff" stroke-width="2" fill="none"/></svg></div>
<div class="ct" style="left:538.5px;top:379px;">俄超</div>
<div class="cb on" style="left:562px;top:383px"><svg width="13" height="13" viewBox="0 0 13 13"><path d="M3 6.5 L5.5 9 L10 3.5" stroke="#fff" stroke-width="2" fill="none"/></svg></div>
<div class="ct" style="left:575.5px;top:379px;">球会友谊</div>
<div class="sel" style="left:458px;top:401px;width:58px;height:18px;"><span style="font-size:12px;line-height:18px;left:7px;top:1px;letter-spacing:0px">Crow*</span><svg width="10" height="7" viewBox="0 0 10 7" style="position:absolute;left:44px;top:5px"><path d="M1 1.5 L5 5.5 L9 1.5" stroke="#000" stroke-width="2" fill="none"/></svg></div>
<div class="sel" style="left:526px;top:401px;width:34px;height:18px;"><span style="font-size:12px;line-height:18px;left:4px;top:1px;letter-spacing:0px">终</span><svg width="10" height="7" viewBox="0 0 10 7" style="position:absolute;left:20px;top:5px"><path d="M1 1.5 L5 5.5 L9 1.5" stroke="#000" stroke-width="2" fill="none"/></svg></div>
<div class="sel" style="left:617px;top:401px;width:82px;height:18px;"><span style="font-size:12px;line-height:18px;left:5px;top:1px;letter-spacing:0px">胜平负均值</span><svg width="10" height="7" viewBox="0 0 10 7" style="position:absolute;left:68px;top:5px"><path d="M1 1.5 L5 5.5 L9 1.5" stroke="#000" stroke-width="2" fill="none"/></svg></div>
<div class="sel" style="left:709px;top:401px;width:34px;height:18px;"><span style="font-size:12px;line-height:18px;left:5px;top:1px;letter-spacing:0px">终</span><svg width="10" height="7" viewBox="0 0 10 7" style="position:absolute;left:20px;top:5px"><path d="M1 1.5 L5 5.5 L9 1.5" stroke="#000" stroke-width="2" fill="none"/></svg></div>
<div class="sel" style="left:818px;top:401px;width:46px;height:18px;"><span style="font-size:12px;line-height:18px;left:4px;top:1px;letter-spacing:0px">全场</span><svg width="10" height="7" viewBox="0 0 10 7" style="position:absolute;left:32px;top:5px"><path d="M1 1.5 L5 5.5 L9 1.5" stroke="#000" stroke-width="2" fill="none"/></svg></div>
<div style="left:423px;top:725px;width:34px;height:2px;background:#0b7b0b"></div>
<div style="left:489px;top:725px;width:29px;height:2px;background:#0b7b0b"></div>
<div style="left:917px;top:0px;width:9px;height:17px;background:#1b95d9;border-radius:0 0 0 3px"></div>
</body></html>
